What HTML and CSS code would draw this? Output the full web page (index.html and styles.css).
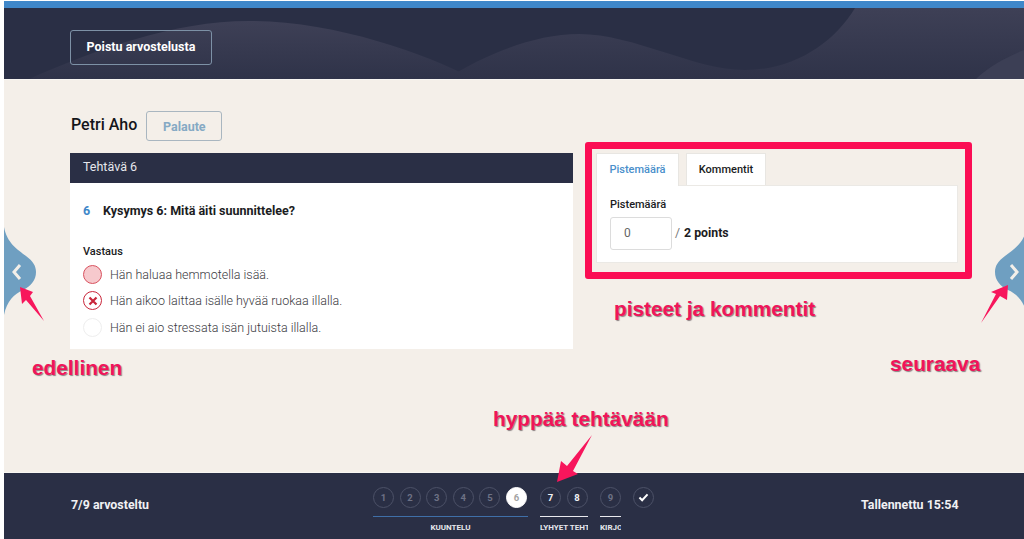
FILE: index.html
```html
<!DOCTYPE html>
<html lang="fi">
  <head>
    <meta charset="UTF-8" />
    <meta name="viewport" content="width=device-width, initial-scale=1.0" />
    <title>Arvostelu</title>
    <link rel="stylesheet" href="styles.css">
  </head>

  <body>
    <div class="page">
      <div class="top-line"></div>

      <header class="header">
        <svg class="waves" viewBox="0 0 1020 71" preserveAspectRatio="none">
          <defs>
            <linearGradient id="waveFade" x1="0" y1="0" x2="0" y2="1">
              <stop offset="0" stop-color="#3e4056" />
              <stop offset="1" stop-color="#2f3349" />
            </linearGradient>
          </defs>
          <path fill="url(#waveFade)" d="M25 71 C90 42 170 13 245 13 C330 13 420 45 470 71 Z" />
          <path fill="url(#waveFade)" d="M442 71 C480 47 530 26 575 26 C630 26 690 62 741 62 C790 62 830 35 851 0 L1020 0 L1020 71 Z" />
          <path class="wave-light" d="M972 71 C985 58 1005 48 1020 42 L1020 71 Z" />
        </svg>
        <button type="button" class="exit-btn">Poistu arvostelusta</button>
      </header>

      <main class="main">
        <div class="student-row">
          <h2 class="student-name">Petri Aho</h2>
          <button type="button" class="feedback-btn">Palaute</button>
        </div>

        <div class="columns">
          <section class="question-card">
            <div class="card-title">Tehtävä 6</div>
            <div class="question-body">
              <div class="question-title">
                <span class="question-num">6</span>
                <span>Kysymys 6: Mitä äiti suunnittelee?</span>
              </div>
              <div class="answer-label">Vastaus</div>
              <div class="option">
                <span class="radio radio-correct"></span>
                <span>Hän haluaa hemmotella isää.</span>
              </div>
              <div class="option">
                <span class="radio radio-wrong">
                  <svg viewBox="0 0 10 10" width="10" height="10">
                    <path d="M1.5 1.5 L8.5 8.5 M8.5 1.5 L1.5 8.5" />
                  </svg>
                </span>
                <span>Hän aikoo laittaa isälle hyvää ruokaa illalla.</span>
              </div>
              <div class="option">
                <span class="radio"></span>
                <span>Hän ei aio stressata isän jutuista illalla.</span>
              </div>
            </div>
          </section>

          <section class="score-panel">
            <div class="tabs">
              <div class="tab tab-active">Pistemäärä</div>
              <div class="tab">Kommentit</div>
            </div>
            <div class="tab-content">
              <label class="score-label" for="score">Pistemäärä</label>
              <div class="score-row">
                <input type="text" id="score" class="score-input" value="0" />
                <span class="score-slash">/</span>
                <span class="score-max">2 points</span>
              </div>
            </div>
          </section>
        </div>
      </main>

      <footer class="footer">
        <div class="graded">7/9 arvosteltu</div>
        <nav class="steps">
          <div class="step-group group-listen">
            <div class="step-row">
              <span class="step">1</span>
              <span class="step">2</span>
              <span class="step">3</span>
              <span class="step">4</span>
              <span class="step">5</span>
              <span class="step step-current">6</span>
            </div>
            <div class="group-name">KUUNTELU</div>
          </div>
          <div class="step-group group-short">
            <div class="step-row">
              <span class="step step-done">7</span>
              <span class="step step-done">8</span>
            </div>
            <div class="group-name">LYHYET TEHTÄVÄT</div>
          </div>
          <div class="step-group group-write">
            <div class="step-row">
              <span class="step">9</span>
            </div>
            <div class="group-name">KIRJOITUS</div>
          </div>
          <span class="step step-check">
            <svg viewBox="0 0 12 10" width="11" height="9">
              <path d="M1.5 5 L4.5 8 L10.5 1.5" />
            </svg>
          </span>
        </nav>
        <div class="saved">Tallennettu 15:54</div>
      </footer>
    </div>

    <!-- sivunuolet -->
    <svg class="handle handle-prev" viewBox="0 0 32 88">
      <path d="M0 0 C3 16 13 22 22 29 C29 34 32 39 32 45 C32 53 27 59 19 63 C10 67 3 74 0 88 Z" />
      <path class="chevron" d="M16 38 L10 45 L16 52" />
    </svg>
    <svg class="handle handle-next" viewBox="0 0 32 88">
      <path d="M32 0 C29 16 19 22 10 29 C3 34 0 39 0 45 C0 53 5 59 13 63 C22 67 29 74 32 88 Z" />
      <path class="chevron" d="M16 38 L22 45 L16 52" />
    </svg>

    <!-- merkinnät kuvan päällä -->
    <div class="mark-box"></div>
    <div class="mark-text mark-prev">edellinen</div>
    <div class="mark-text mark-next">seuraava</div>
    <div class="mark-text mark-score">pisteet ja kommentit</div>
    <div class="mark-text mark-jump">hyppää tehtävään</div>

    <svg class="mark-arrows" viewBox="0 0 1024 539">
      <path d="M20 287 L33 292 L30 296 L44 321 L26 300 L22 304 Z" />
      <path d="M1008 285 L1007 300 L1000 296 L981 323 L996 294 L991 292 Z" />
      <path d="M557 482 L561 461 L567 466 L592 435 L573 471 L578 474 Z" />
    </svg>
  </body>
</html>
```

FILE: styles.css
```css
* {
  margin: 0;
  padding: 0;
  box-sizing: border-box;
}

body {
  font-family: Roboto, "Liberation Sans", sans-serif;
  background-color: white;
  width: 1024px;
  height: 539px;
  overflow: hidden;
  position: relative;
}

.page {
  margin-left: 4px;
  height: 539px;
  display: flex;
  flex-direction: column;
  background-color: #f4efe9;
}

.top-line {
  height: 8px;
  border-top: 1px solid white;
  background-color: #3f87c9;
}

.header {
  position: relative;
  height: 72px;
  padding: 22px 66px 0;
  background-color: #2a2f45;
  border-bottom: 1px solid #f8f6f2;
}

.waves {
  position: absolute;
  left: 0;
  top: 0;
  width: 100%;
  height: 71px;
}

.wave-light {
  fill: #3c3f55;
}

.exit-btn {
  position: relative;
  width: 142px;
  height: 35px;
  padding-bottom: 2px;
  background-color: transparent;
  border: 1px solid #7d91a6;
  border-radius: 3px;
  color: white;
  font-family: inherit;
  font-size: 12.5px;
  font-weight: 700;
}

.main {
  flex: 1;
  padding: 31px 66px 0;
}

.student-row {
  display: flex;
  align-items: center;
  gap: 9px;
  height: 30px;
}

.student-name {
  padding-bottom: 3px;
  padding-left: 1px;
  font-size: 16px;
  font-weight: 500;
  color: #14151a;
}

.feedback-btn {
  width: 76px;
  height: 30px;
  background-color: transparent;
  border: 1px solid #a9b6c0;
  border-radius: 3px;
  color: #85a9c4;
  font-family: inherit;
  font-size: 12.5px;
  font-weight: 700;
}

.columns {
  display: grid;
  grid-template-columns: 503px 362px;
  column-gap: 23px;
  margin-top: 12px;
}

.question-card {
  height: 196px;
  background-color: white;
}

.card-title {
  height: 30px;
  padding: 6px 13px;
  background-color: #2a2f45;
  color: #e6e7ec;
  font-size: 12.5px;
  line-height: 16px;
}

.question-body {
  padding: 20px 13px 0;
}

.question-title {
  display: flex;
  gap: 14px;
  height: 16px;
  font-size: 12.5px;
  line-height: 16px;
  font-weight: 700;
  color: #1b1c22;
}

.question-num {
  width: 6px;
  color: #3f87c9;
}

.answer-label {
  margin-top: 26px;
  margin-bottom: 2px;
  font-size: 11px;
  line-height: 14px;
  font-weight: 500;
  color: #1b1c22;
}

.option {
  display: flex;
  align-items: center;
  gap: 8px;
  height: 26.5px;
  font-size: 12.5px;
  font-weight: 300;
  color: #3b3b3f;
}

.radio {
  display: flex;
  align-items: center;
  justify-content: center;
  width: 19px;
  height: 19px;
  border: 1px solid #eeeeee;
  border-radius: 50%;
}

.radio-correct {
  background-color: #f6c9cd;
  border-color: #d9525f;
}

.radio-wrong {
  border-color: #c9263a;
}

.radio-wrong path {
  fill: none;
  stroke: #c9263a;
  stroke-width: 2.2;
}

.score-panel {
  width: 362px;
}

.tabs {
  display: flex;
  gap: 7px;
  height: 32px;
}

.tab {
  width: 80px;
  height: 32px;
  border: 1px solid #e8e6e2;
  border-bottom: none;
  background-color: white;
  text-align: center;
  font-size: 11px;
  line-height: 32px;
  font-weight: 500;
  color: #1b1c22;
}

.tab-active {
  width: 83px;
  height: 33px;
  color: #4a8fcb;
  position: relative;
}

.tab-content {
  height: 78px;
  padding: 12px 13px 0;
  background-color: white;
  border: 1px solid #ebe9e5;
}

.score-label {
  display: block;
  font-size: 11px;
  line-height: 14px;
  font-weight: 500;
  color: #1b1c22;
}

.score-row {
  display: flex;
  align-items: center;
  margin-top: 5px;
  font-size: 12.3px;
}

.score-input {
  width: 62px;
  height: 33px;
  padding-left: 13px;
  padding-bottom: 2px;
  border: 1px solid #dcdcdc;
  border-radius: 3px;
  font-family: inherit;
  font-size: 12px;
  color: #666;
}

.score-slash {
  margin: 0 4px 2px 3px;
  color: #777;
}

.score-max {
  margin-bottom: 2px;
  font-weight: 700;
  color: #1b1c22;
}

.footer {
  height: 67px;
  display: flex;
  align-items: flex-start;
  padding-left: 67px;
  background-color: #2a2f45;
  border-top: 1px solid #f8f6f2;
  color: #f1f1f4;
  font-size: 12.4px;
  font-weight: 700;
}

.graded {
  width: 302px;
  margin-top: 25px;
  line-height: 14px;
}

.steps {
  display: flex;
  width: 488px;
  padding-top: 14px;
}

.step-group {
  margin-right: 12px;
}

.group-listen {
  width: 155px;
}

.group-short {
  width: 48px;
}

.group-write {
  width: 21px;
}

.step-row {
  display: flex;
  gap: 5.6px;
  height: 30px;
  border-bottom: 1px solid #e9e9ee;
}

.group-listen .step-row {
  border-bottom-color: #3f6fa8;
}

.step {
  display: flex;
  align-items: center;
  justify-content: center;
  flex-shrink: 0;
  width: 21px;
  height: 21px;
  border: 1px solid #4c5167;
  border-radius: 50%;
  font-size: 9.5px;
  font-weight: 700;
  color: #6e7285;
}

.step-current {
  background-color: white;
  border-color: white;
  color: #a3a3a3;
}

.step-done {
  color: #f1f1f4;
}

.step-check path {
  fill: none;
  stroke: white;
  stroke-width: 2.2;
}

.group-name {
  margin-top: 5px;
  overflow: hidden;
  white-space: nowrap;
  text-align: center;
  font-size: 8px;
  line-height: 11px;
  font-weight: 700;
  color: #e6e7ec;
}

.group-short .group-name,
.group-write .group-name {
  text-align: left;
}

.saved {
  margin-top: 25px;
  line-height: 14px;
}

.handle {
  position: absolute;
  width: 32px;
  height: 88px;
  fill: #6f9fc1;
}

.handle-prev {
  left: 4px;
  top: 227px;
}

.handle-next {
  right: -3px;
  top: 227px;
}

.chevron {
  fill: none;
  stroke: #f3efe9;
  stroke-width: 3;
}

.mark-box {
  position: absolute;
  left: 585px;
  top: 142px;
  width: 387px;
  height: 137px;
  border: 7px solid #fb0d54;
  border-radius: 3px;
}

.mark-text {
  position: absolute;
  font-family: "Liberation Sans", Arial, sans-serif;
  font-size: 20.8px;
  line-height: 24px;
  font-weight: 700;
  color: #f0145a;
  white-space: nowrap;
  text-shadow: 1px 1px 1px #8a7f80;
}

.mark-prev {
  left: 32px;
  top: 356px;
}

.mark-next {
  left: 890px;
  top: 352px;
}

.mark-score {
  left: 614px;
  top: 297px;
}

.mark-jump {
  left: 493px;
  top: 407px;
}

.mark-arrows {
  position: absolute;
  left: 0;
  top: 0;
  width: 1024px;
  height: 539px;
  fill: #f7165c;
  pointer-events: none;
}
```
